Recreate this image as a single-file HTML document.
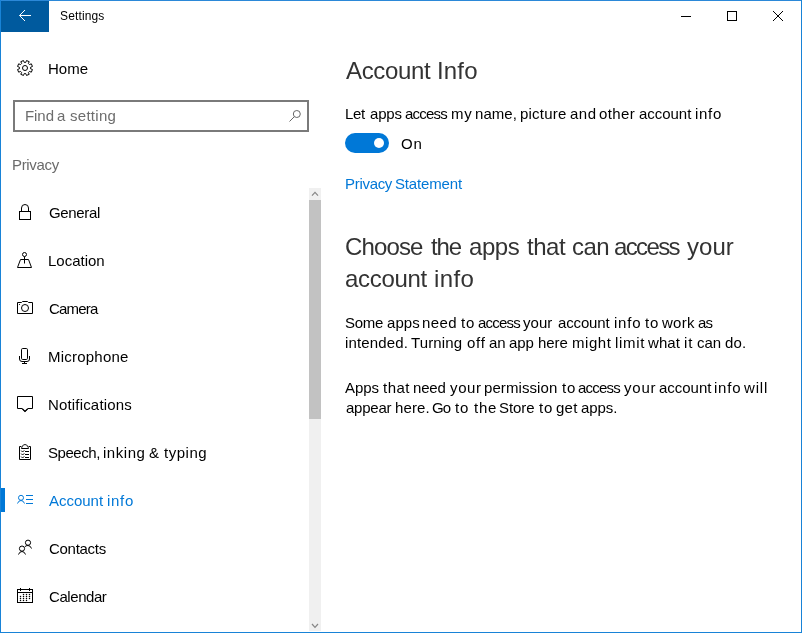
<!DOCTYPE html>
<html><head><meta charset="utf-8">
<style>
html,body{margin:0;padding:0;}
body{width:802px;height:633px;position:relative;overflow:hidden;background:#fff;font-family:"Liberation Sans",sans-serif;color:#000;}
.a{position:absolute;white-space:nowrap;will-change:transform;}
.t15{font-size:15px;line-height:20px;}
.h24{font-size:24px;line-height:32px;color:#333;}
svg{position:absolute;left:0;top:0;overflow:visible;}
</style></head><body>
<!-- window border -->
<div class="a" style="left:0;top:0;width:802px;height:1px;background:#2b88d8"></div>
<div class="a" style="left:0;top:0;width:1px;height:633px;background:#1883d7"></div>
<div class="a" style="left:801px;top:0;width:1px;height:633px;background:#1883d7"></div>
<div class="a" style="left:0;top:632px;width:802px;height:1px;background:#1883d7"></div>

<!-- back button -->
<div class="a" style="left:1px;top:1px;width:48px;height:31px;background:#005a9e"></div>
<div class="a" style="left:60px;top:8px;font-size:12px;line-height:16px;letter-spacing:0.14px">Settings</div>

<!-- left nav text -->
<div class="a t15" style="left:48px;top:59px">Home</div>
<div class="a" style="left:13px;top:100px;width:292px;height:28px;border:2px solid #7a7a7a"></div>
<div class="a t15" style="left:12px;top:155px;color:#6b6b6b;letter-spacing:-0.33px">Privacy</div>

<div class="a t15" style="left:49px;top:203px;letter-spacing:-0.33px">General</div>
<div class="a t15" style="left:48px;top:251px">Location</div>
<div class="a t15" style="left:49px;top:299px;letter-spacing:-0.8px">Camera</div>
<div class="a t15" style="left:48px;top:347px;letter-spacing:0.22px">Microphone</div>
<div class="a t15" style="left:48px;top:395px;letter-spacing:0.17px">Notifications</div>
<div class="a t15" style="left:49px;top:539px;letter-spacing:-0.29px">Contacts</div>
<div class="a t15" style="left:49px;top:587px;letter-spacing:-0.43px">Calendar</div>
<div class="a" style="left:1px;top:488px;width:4px;height:24px;background:#0078d7"></div>

<!-- scrollbar -->
<div class="a" style="left:309px;top:188px;width:12px;height:443px;background:#f0f0f0"></div>
<div class="a" style="left:309px;top:200px;width:12px;height:219px;background:#c2c2c2"></div>

<!-- icons -->
<svg width="802" height="633">
 <g fill="none" stroke="#fff" stroke-width="1">
  <path d="M19.5 15.5 H31 M25 10 L19.5 15.5 L25 21"/>
 </g>
 <g fill="none" stroke="#000" stroke-width="1">
  <path d="M681 16.5 H691"/>
  <rect x="727.5" y="11.5" width="9" height="9"/>
  <path d="M773 11 L783 21 M783 11 L773 21"/>
  <!-- gear -->
  <path d="M30.55 68.73 L32.45 69.52 L31.34 72.19 L29.44 71.41 L28.41 72.44 L29.19 74.34 L26.52 75.45 L25.73 73.55 L24.27 73.55 L23.48 75.45 L20.81 74.34 L21.59 72.44 L20.56 71.41 L18.66 72.19 L17.55 69.52 L19.45 68.73 L19.45 67.27 L17.55 66.48 L18.66 63.81 L20.56 64.59 L21.59 63.56 L20.81 61.66 L23.48 60.55 L24.27 62.45 L25.73 62.45 L26.52 60.55 L29.19 61.66 L28.41 63.56 L29.44 64.59 L31.34 63.81 L32.45 66.48 L30.55 67.27 Z"/>
  <circle cx="25" cy="68" r="2.5"/>
  <!-- lock -->
  <rect x="19.5" y="211.5" width="11" height="8"/>
  <path d="M21.5 211.5 V208 A3.5 3.5 0 0 1 28.5 208 V211.5"/>
  <!-- location -->
  <circle cx="24.5" cy="254.5" r="2"/>
  <path d="M24.5 256.5 V263.5 M17.5 267.5 L20.5 259.5 H28.5 L31.5 267.5 Z"/>
  <!-- camera -->
  <path d="M17.5 302.5 H21.5 L22.5 301.5 H27.5 L28.5 302.5 H32.5 V313.5 H17.5 Z"/>
  <circle cx="25" cy="308" r="3.5"/>
  <!-- mic -->
  <rect x="21.5" y="348.5" width="6" height="11" rx="1.2"/>
  <path d="M19.5 356 V359 Q19.5 361.5 22 361.5 H27 Q29.5 361.5 29.5 359 V356 M24.5 361.5 V363.5 M22 363.5 H27"/>
  <!-- notifications -->
  <path d="M17.5 396.5 H32.5 V408.5 H28 L25 411.6 L22 408.5 H17.5 Z"/><path d="M22.2 408.6 L25 411.4 L27.8 408.6" stroke-width="1.3"/>
  <!-- clipboard -->
  <path d="M21.5 446.5 H19.5 V459.5 H30.5 V446.5 H28.5"/>
  <path d="M21.5 448.5 H28.5 V447.8 L27.5 446.8 V446.5 C27.5 444 22.5 444 22.5 446.5 V446.8 L21.5 447.8 Z"/>
  <path d="M25 451.5 H29 M25 454.5 H29 M25 457.5 H29"/>
  <path d="M21.2 450.6 L22.6 452 L24.3 450.3 M21.2 453.6 L22.6 455 L24.3 453.3 M21.2 456.6 L22.6 458 L24.3 456.3"/>
  <!-- contacts -->
  <circle cx="28" cy="542.7" r="2.6"/>
  <circle cx="22" cy="548.6" r="2.6"/>
  <path d="M18.5 554.5 Q19.5 551.5 22 551.5 Q24.5 551.5 25.5 554.5"/>
  <path d="M24.8 546.8 Q25.8 545.5 28 545.5 Q30.5 545.5 31.5 548.5"/>
  <!-- calendar -->
  <rect x="17.5" y="589.5" width="15" height="13"/>
  <path d="M17.5 592.5 H32.5 M20.5 588 V591 M29.5 588 V591"/>
 </g>
 <g fill="#000">
  <circle cx="19.5" cy="304.5" r="0.6"/>
  <circle cx="23.5" cy="594.5" r="0.75"/><circle cx="26.5" cy="594.5" r="0.75"/><circle cx="29.5" cy="594.5" r="0.75"/>
  <circle cx="20.5" cy="596.5" r="0.75"/><circle cx="23.5" cy="596.5" r="0.75"/><circle cx="26.5" cy="596.5" r="0.75"/><circle cx="29.5" cy="596.5" r="0.75"/>
  <circle cx="20.5" cy="598.5" r="0.75"/><circle cx="23.5" cy="598.5" r="0.75"/><circle cx="26.5" cy="598.5" r="0.75"/><circle cx="29.5" cy="598.5" r="0.75"/>
  <circle cx="20.5" cy="600.5" r="0.75"/><circle cx="23.5" cy="600.5" r="0.75"/><circle cx="26.5" cy="600.5" r="0.75"/>
 </g>
 <g fill="none" stroke="#0078d7" stroke-width="1">
  <circle cx="21" cy="497.8" r="2.5"/>
  <path d="M17.5 503.5 Q18.5 500.5 21 500.5 Q23.5 500.5 24.5 503.5 M26 495.5 H33 M26 499.5 H33 M26 503.5 H33"/>
 </g>
 <g fill="none" stroke="#666" stroke-width="1">
  <circle cx="296.8" cy="114" r="3.5"/>
  <path d="M289.5 121.5 L294.3 116.7"/>
 </g>
 <g fill="none" stroke="#868686" stroke-width="1.2">
  <path d="M312 195.6 L315 192.4 L318 195.6"/>
  <path d="M312 624 L315 627.4 L318 624"/>
 </g>
</svg>

<!-- right content -->
<div class="a" style="left:345px;top:133px;width:44px;height:20px;border-radius:10px;background:#0078d7"></div>
<div class="a" style="left:374px;top:138px;width:10px;height:10px;border-radius:5px;background:#fff"></div>
<div class="a t15" style="left:401px;top:134px;letter-spacing:0.8px">On</div>
<div class="a" style="left:346.0px;top:55px;font-size:24px;line-height:32px;color:#333;letter-spacing:-0.333px">Account</div>
<div class="a" style="left:436.5px;top:55px;font-size:24px;line-height:32px;color:#333;letter-spacing:0.167px">Info</div>
<div class="a" style="left:345.0px;top:104px;font-size:15px;line-height:20px;color:#000;letter-spacing:-0.350px">Let</div>
<div class="a" style="left:369.5px;top:104px;font-size:15px;line-height:20px;color:#000;letter-spacing:-0.200px">apps</div>
<div class="a" style="left:404.7px;top:104px;font-size:15px;line-height:20px;color:#000;letter-spacing:-0.800px">access</div>
<div class="a" style="left:450.8px;top:104px;font-size:15px;line-height:20px;color:#000;letter-spacing:0.700px">my</div>
<div class="a" style="left:475.2px;top:104px;font-size:15px;line-height:20px;color:#000;letter-spacing:0.050px">name,</div>
<div class="a" style="left:519.5px;top:104px;font-size:15px;line-height:20px;color:#000;letter-spacing:0.200px">picture</div>
<div class="a" style="left:569.9px;top:104px;font-size:15px;line-height:20px;color:#000;letter-spacing:0.500px">and</div>
<div class="a" style="left:599.2px;top:104px;font-size:15px;line-height:20px;color:#000;letter-spacing:0.400px">other</div>
<div class="a" style="left:638.7px;top:104px;font-size:15px;line-height:20px;color:#000;letter-spacing:-0.033px">account</div>
<div class="a" style="left:694.5px;top:104px;font-size:15px;line-height:20px;color:#000;letter-spacing:0.700px">info</div>
<div class="a" style="left:345.0px;top:174px;font-size:15px;line-height:20px;color:#0078d7;letter-spacing:-0.300px">Privacy</div>
<div class="a" style="left:394.9px;top:174px;font-size:15px;line-height:20px;color:#0078d7;letter-spacing:-0.150px">Statement</div>
<div class="a" style="left:345.0px;top:231px;font-size:24px;line-height:32px;color:#333;letter-spacing:-0.860px">Choose</div>
<div class="a" style="left:430.8px;top:231px;font-size:24px;line-height:32px;color:#333;letter-spacing:-1.100px">the</div>
<div class="a" style="left:468.7px;top:231px;font-size:24px;line-height:32px;color:#333;letter-spacing:-0.467px">apps</div>
<div class="a" style="left:526.7px;top:231px;font-size:24px;line-height:32px;color:#333;letter-spacing:-0.467px">that</div>
<div class="a" style="left:571.7px;top:231px;font-size:24px;line-height:32px;color:#333;letter-spacing:-0.500px">can</div>
<div class="a" style="left:614.4px;top:231px;font-size:24px;line-height:32px;color:#333;letter-spacing:-1.620px">access</div>
<div class="a" style="left:686.8px;top:231px;font-size:24px;line-height:32px;color:#333;letter-spacing:0.033px">your</div>
<div class="a" style="left:345.0px;top:263px;font-size:24px;line-height:32px;color:#333;letter-spacing:-0.317px">account</div>
<div class="a" style="left:433.5px;top:263px;font-size:24px;line-height:32px;color:#333;letter-spacing:0.367px">info</div>
<div class="a" style="left:344.6px;top:313px;font-size:15px;line-height:20px;color:#000;letter-spacing:-0.267px">Some</div>
<div class="a" style="left:386.8px;top:313px;font-size:15px;line-height:20px;color:#000;letter-spacing:0.033px">apps</div>
<div class="a" style="left:421.9px;top:313px;font-size:15px;line-height:20px;color:#000;letter-spacing:0.367px">need</div>
<div class="a" style="left:460.6px;top:313px;font-size:15px;line-height:20px;color:#000;letter-spacing:0.800px">to</div>
<div class="a" style="left:477.6px;top:313px;font-size:15px;line-height:20px;color:#000;letter-spacing:-0.800px">access</div>
<div class="a" style="left:522.9px;top:313px;font-size:15px;line-height:20px;color:#000;letter-spacing:0.033px">your</div>
<div class="a" style="left:558.1px;top:313px;font-size:15px;line-height:20px;color:#000;letter-spacing:-0.150px">account</div>
<div class="a" style="left:613.8px;top:313px;font-size:15px;line-height:20px;color:#000;letter-spacing:0.767px">info</div>
<div class="a" style="left:645.0px;top:313px;font-size:15px;line-height:20px;color:#000;letter-spacing:0.800px">to</div>
<div class="a" style="left:661.8px;top:313px;font-size:15px;line-height:20px;color:#000;letter-spacing:0.267px">work</div>
<div class="a" style="left:698.1px;top:313px;font-size:15px;line-height:20px;color:#000;letter-spacing:-0.800px">as</div>
<div class="a" style="left:345.0px;top:333px;font-size:15px;line-height:20px;color:#000;letter-spacing:0.138px">intended.</div>
<div class="a" style="left:410.8px;top:333px;font-size:15px;line-height:20px;color:#000;letter-spacing:0.133px">Turning</div>
<div class="a" style="left:466.8px;top:333px;font-size:15px;line-height:20px;color:#000;letter-spacing:0.750px">off</div>
<div class="a" style="left:489.3px;top:333px;font-size:15px;line-height:20px;color:#000;letter-spacing:-0.100px">an</div>
<div class="a" style="left:509.2px;top:333px;font-size:15px;line-height:20px;color:#000;letter-spacing:-0.150px">app</div>
<div class="a" style="left:538.1px;top:333px;font-size:15px;line-height:20px;color:#000;letter-spacing:-0.100px">here</div>
<div class="a" style="left:572.0px;top:333px;font-size:15px;line-height:20px;color:#000;letter-spacing:0.550px">might</div>
<div class="a" style="left:614.8px;top:333px;font-size:15px;line-height:20px;color:#000;letter-spacing:0.700px">limit</div>
<div class="a" style="left:648.0px;top:333px;font-size:15px;line-height:20px;color:#000;letter-spacing:0.067px">what</div>
<div class="a" style="left:684.0px;top:333px;font-size:15px;line-height:20px;color:#000;letter-spacing:0.800px">it</div>
<div class="a" style="left:697.4px;top:333px;font-size:15px;line-height:20px;color:#000;letter-spacing:-0.100px">can</div>
<div class="a" style="left:724.8px;top:333px;font-size:15px;line-height:20px;color:#000;letter-spacing:0.150px">do.</div>
<div class="a" style="left:345.2px;top:378px;font-size:15px;line-height:20px;color:#000;letter-spacing:-0.067px">Apps</div>
<div class="a" style="left:383.4px;top:378px;font-size:15px;line-height:20px;color:#000;letter-spacing:0.467px">that</div>
<div class="a" style="left:413.2px;top:378px;font-size:15px;line-height:20px;color:#000;letter-spacing:-0.167px">need</div>
<div class="a" style="left:450.0px;top:378px;font-size:15px;line-height:20px;color:#000;letter-spacing:0.633px">your</div>
<div class="a" style="left:483.9px;top:378px;font-size:15px;line-height:20px;color:#000;letter-spacing:0.078px">permission</div>
<div class="a" style="left:561.6px;top:378px;font-size:15px;line-height:20px;color:#000;letter-spacing:0.800px">to</div>
<div class="a" style="left:578.2px;top:378px;font-size:15px;line-height:20px;color:#000;letter-spacing:-0.800px">access</div>
<div class="a" style="left:623.5px;top:378px;font-size:15px;line-height:20px;color:#000;letter-spacing:0.800px">your</div>
<div class="a" style="left:658.6px;top:378px;font-size:15px;line-height:20px;color:#000;letter-spacing:-0.017px">account</div>
<div class="a" style="left:714.4px;top:378px;font-size:15px;line-height:20px;color:#000;letter-spacing:0.767px">info</div>
<div class="a" style="left:744.0px;top:378px;font-size:15px;line-height:20px;color:#000;letter-spacing:0.800px">will</div>
<div class="a" style="left:345.6px;top:398px;font-size:15px;line-height:20px;color:#000;letter-spacing:-0.220px">appear</div>
<div class="a" style="left:394.9px;top:398px;font-size:15px;line-height:20px;color:#000;letter-spacing:0.100px">here.</div>
<div class="a" style="left:431.8px;top:398px;font-size:15px;line-height:20px;color:#000;letter-spacing:-0.800px">Go</div>
<div class="a" style="left:455.2px;top:398px;font-size:15px;line-height:20px;color:#000;letter-spacing:0.800px">to</div>
<div class="a" style="left:473.7px;top:398px;font-size:15px;line-height:20px;color:#000;letter-spacing:0.750px">the</div>
<div class="a" style="left:498.6px;top:398px;font-size:15px;line-height:20px;color:#000;letter-spacing:-0.075px">Store</div>
<div class="a" style="left:538.8px;top:398px;font-size:15px;line-height:20px;color:#000;letter-spacing:0.800px">to</div>
<div class="a" style="left:555.6px;top:398px;font-size:15px;line-height:20px;color:#000;letter-spacing:0.250px">get</div>
<div class="a" style="left:581.1px;top:398px;font-size:15px;line-height:20px;color:#000;letter-spacing:-0.075px">apps.</div>
<div class="a" style="left:47.7px;top:443px;font-size:15px;line-height:20px;color:#000;letter-spacing:-0.450px">Speech,</div>
<div class="a" style="left:102.8px;top:443px;font-size:15px;line-height:20px;color:#000;letter-spacing:0.540px">inking</div>
<div class="a" style="left:148.9px;top:443px;font-size:15px;line-height:20px;color:#000;letter-spacing:0.000px">&amp;</div>
<div class="a" style="left:163.7px;top:443px;font-size:15px;line-height:20px;color:#000;letter-spacing:0.520px">typing</div>
<div class="a" style="left:25.0px;top:106px;font-size:15px;line-height:20px;color:#6d6d6d;letter-spacing:-0.067px">Find</div>
<div class="a" style="left:57.0px;top:106px;font-size:15px;line-height:20px;color:#6d6d6d;letter-spacing:0.000px">a</div>
<div class="a" style="left:69.6px;top:106px;font-size:15px;line-height:20px;color:#6d6d6d;letter-spacing:0.283px">setting</div>
<div class="a" style="left:49.3px;top:491px;font-size:15px;line-height:20px;color:#0078d7;letter-spacing:-0.017px">Account</div>
<div class="a" style="left:106.9px;top:491px;font-size:15px;line-height:20px;color:#0078d7;letter-spacing:0.700px">info</div>

</body></html>
